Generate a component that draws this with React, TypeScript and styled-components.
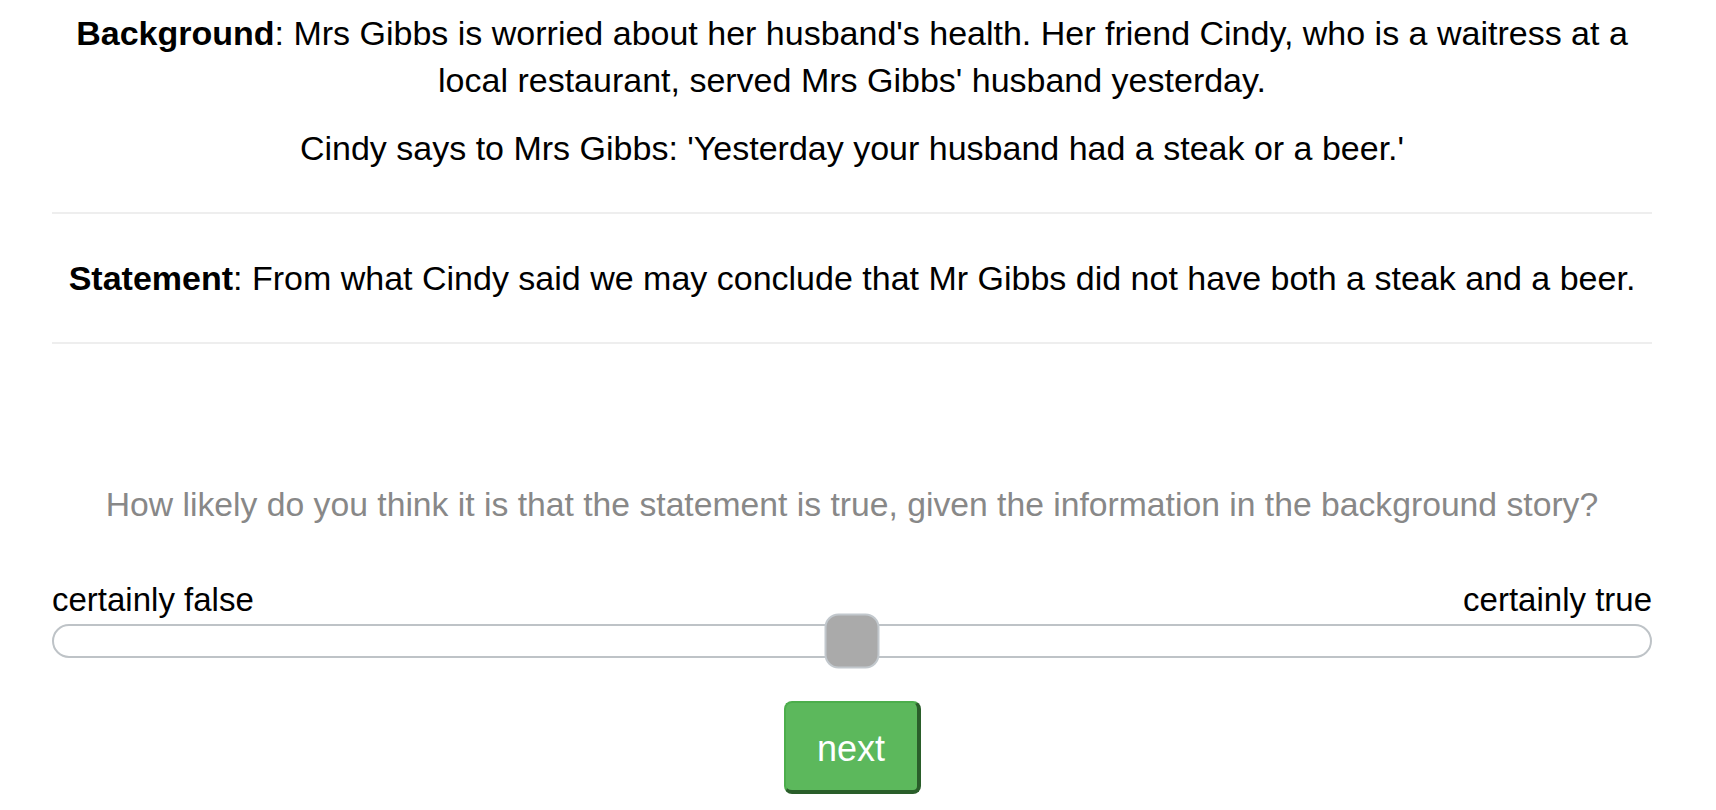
import React from "react";
import styled, { createGlobalStyle } from "styled-components";

const Global = createGlobalStyle`
  html, body { margin: 0; padding: 0; background: #fff; }
  body {
    font-family: "Liberation Sans", Arial, Helvetica, sans-serif;
    font-size: 34px;
    line-height: 47px;
    color: #000;
  }
`;

const Page = styled.main`
  width: 1600px;
  padding: 10px 0 0 52px;
  box-sizing: content-box;
`;

const Para = styled.p<{ $gap?: number }>`
  margin: 0 0 ${(p) => p.$gap ?? 0}px;
  text-align: center;
`;

const Rule = styled.hr`
  border: 0;
  border-top: 2px solid #eeeeee;
  margin: 40px 0 41px;
  height: 0;
`;

const Question = styled.p`
  margin: 137px 0 48px;
  text-align: center;
  color: #888888;
  font-size: 33.7px;
`;

const Labels = styled.div`
  display: flex;
  justify-content: space-between;
  margin-bottom: 1px;
  font-size: 33px;
`;

const Track = styled.div`
  position: relative;
  height: 30px;
  border: 2px solid #bec3c7;
  border-radius: 17px;
  background: #fff;
`;

const Thumb = styled.div`
  position: absolute;
  left: 50%;
  top: 50%;
  width: 51px;
  height: 51px;
  transform: translate(-50%, -50%);
  background: #aaaaaa;
  border: 2px solid #c2c8cd;
  border-radius: 14px;
`;

const ButtonRow = styled.div`
  display: flex;
  justify-content: center;
  margin-top: 43px;
`;

const NextButton = styled.button`
  width: 137px;
  height: 93px;
  box-sizing: border-box;
  font-family: inherit;
  font-size: 36px;
  color: #fff;
  background: #5cb85c;
  border: 2px solid #4cae4c;
  border-right: 4px solid #2a5e2a;
  border-bottom: 4px solid #2a5e2a;
  border-radius: 8px;
  padding: 4px 0 0;
  cursor: pointer;
`;

export default function App() {
  return (
    <>
      <Global />
      <Page>
        <Para $gap={21}>
          <b>Background</b>: Mrs Gibbs is worried about her husband's health. Her friend
          Cindy, who is a waitress at a local restaurant, served Mrs Gibbs' husband yesterday.
        </Para>
        <Para>Cindy says to Mrs Gibbs: 'Yesterday your husband had a steak or a beer.'</Para>
        <Rule />
        <Para>
          <b>Statement</b>: From what Cindy said we may conclude that Mr Gibbs did not have
          both a steak and a beer.
        </Para>
        <Rule />
        <Question>
          How likely do you think it is that the statement is true, given the information in
          the background story?
        </Question>
        <Labels>
          <span>certainly false</span>
          <span>certainly true</span>
        </Labels>
        <Track>
          <Thumb />
        </Track>
        <ButtonRow>
          <NextButton>next</NextButton>
        </ButtonRow>
      </Page>
    </>
  );
}
